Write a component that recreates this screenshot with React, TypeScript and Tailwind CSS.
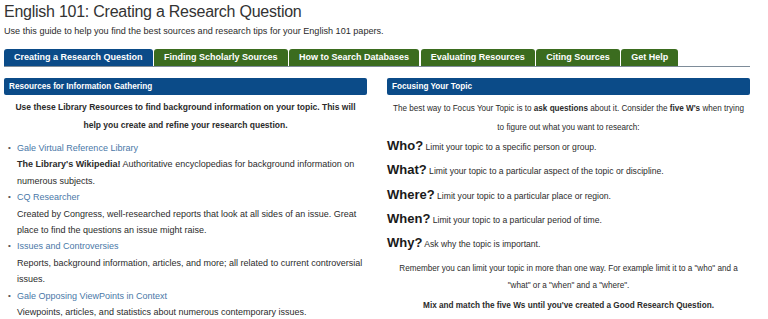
const tabs = [
  "Creating a Research Question",
  "Finding Scholarly Sources",
  "How to Search Databases",
  "Evaluating Resources",
  "Citing Sources",
  "Get Help",
];

const resources = [
  {
    name: "Gale Virtual Reference Library",
    desc: (
      <>
        <b>The Library's Wikipedia!</b> Authoritative encyclopedias for background information on numerous subjects.
      </>
    ),
  },
  {
    name: "CQ Researcher",
    desc: "Created by Congress, well-researched reports that look at all sides of an issue. Great place to find the questions an issue might raise.",
  },
  {
    name: "Issues and Controversies",
    desc: "Reports, background information, articles, and more; all related to current controversial issues.",
  },
  {
    name: "Gale Opposing ViewPoints in Context",
    desc: "Viewpoints, articles, and statistics about numerous contemporary issues.",
  },
];

const ws = [
  ["Who?", "Limit your topic to a specific person or group."],
  ["What?", "Limit your topic to a particular aspect of the topic or discipline."],
  ["Where?", "Limit your topic to a particular place or region."],
  ["When?", "Limit your topic to a particular period of time."],
  ["Why?", "Ask why the topic is important."],
];

const App = () => {
  return (
    <div className="w-[768px] h-[319px] overflow-hidden bg-white text-[#2b2b2b] font-['Liberation_Sans',Arial,sans-serif]">
      <div className="w-[746px] ml-[4px]">
        <h1 className="text-[16px] tracking-[-0.25px] leading-[24px] text-[#333]">English 101: Creating a Research Question</h1>
        <p className="text-[9.1px] leading-[13px] mt-[1px]">
          Use this guide to help you find the best sources and research tips for your English 101 papers.
        </p>

        <div className="flex gap-[1.5px] mt-[11px] border-b border-[#7e8c99]">
          {tabs.map((t, i) => (
            <div
              key={t}
              className={
                "shrink-0 whitespace-nowrap h-[17px] px-[10px] rounded-t-[3px] text-white font-bold text-[9px] leading-[17px] " +
                (i === 0 ? "bg-[#0b4b88]" : "bg-[#3b6c1f]")
              }
            >
              {t}
            </div>
          ))}
        </div>

        <div className="grid grid-cols-2 gap-[20px] mt-[11px]">
          <div>
            <div className="h-[17px] rounded-[2px] bg-[#0b4b88] text-white font-bold text-[8.2px] leading-[17px] pl-[5px]">
              Resources for Information Gathering
            </div>
            <p className="text-center font-bold text-[8.5px] leading-[18px] mt-[3px] px-[2px]">
              Use these Library Resources to find background information on your topic. This will help you create and refine your research question.
            </p>
            <ul className="mt-[6px] text-[9px] leading-[16.4px]">
              {resources.map((r) => (
                <li key={r.name} className="flex pl-[4px]">
                  <span className="w-[9px] shrink-0 text-[#555] text-[8px]">•</span>
                  <div className="pr-[3px]">
                    <div className="text-[#4a78a8]">{r.name}</div>
                    <div>{r.desc}</div>
                  </div>
                </li>
              ))}
            </ul>
          </div>

          <div>
            <div className="h-[17px] rounded-[2px] bg-[#0b4b88] text-white font-bold text-[8.2px] leading-[17px] pl-[5px]">
              Focusing Your Topic
            </div>
            <p className="text-center text-[8.15px] leading-[19px] mt-[4px] px-[2px]">
              The best way to Focus Your Topic is to <b>ask questions</b> about it. Consider the <b>five W's</b> when trying to figure out what you want to research:
            </p>
            <div className="-mt-[2px] flex flex-col">
              {ws.map(([w, d]) => (
                <p key={w} className="h-[24.25px] text-[8.6px] leading-[24.25px]">
                  <b className="text-[13px] leading-none text-[#1a1a1a]">{w}</b> {d}
                </p>
              ))}
            </div>
            <p className="text-center text-[8.15px] leading-[17px] mt-[4px] px-[2px]">
              Remember you can limit your topic in more than one way. For example limit it to a "who" and a "what" or a "when" and a "where".
            </p>
            <p className="text-center text-[8.2px] leading-[17px] mt-[3px] font-bold">
              Mix and match the five Ws until you've created a Good Research Question.
            </p>
          </div>
        </div>
      </div>
    </div>
  );
};

export default App;
